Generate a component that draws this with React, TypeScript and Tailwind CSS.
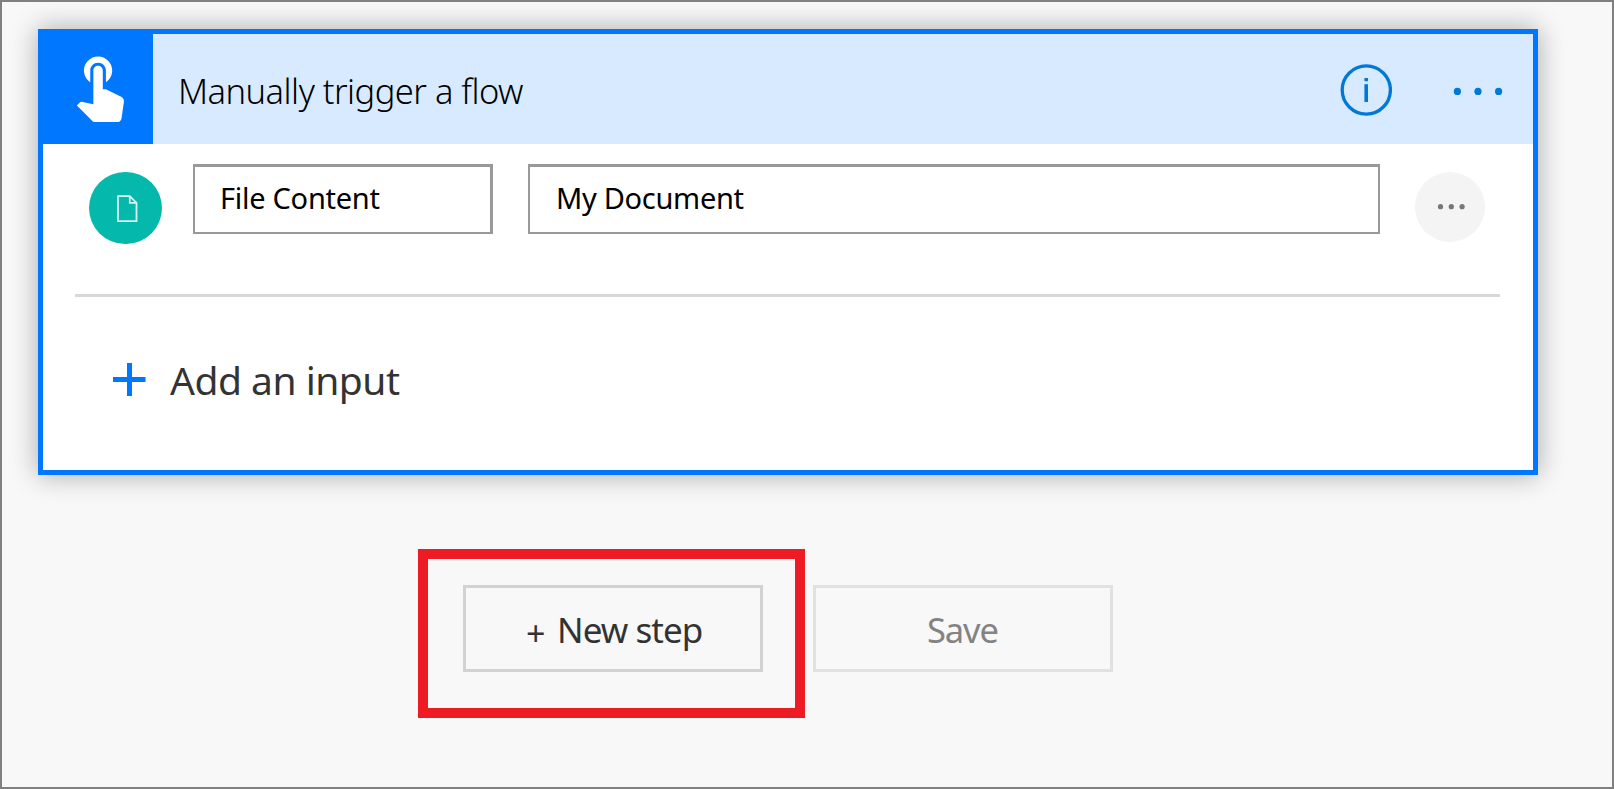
import React from "react";

const sans = "font-['Noto_Sans','Open_Sans',sans-serif]";

function TouchIcon() {
  return (
    <svg viewBox="0 0 24 24" className="size-[75.3px] shrink-0 fill-white" aria-hidden="true">
      <path d="M9 11.24V7.5C9 6.12 10.12 5 11.5 5S14 6.12 14 7.5v3.74c1.21-.81 2-2.18 2-3.74C16 5.01 13.99 3 11.5 3S7 5.01 7 7.5c0 1.56.79 2.93 2 3.74zm9.84 4.63l-4.54-2.26c-.17-.07-.35-.11-.54-.11H13v-6c0-.83-.67-1.5-1.5-1.5S10 6.67 10 7.5v10.74l-3.43-.72c-.08-.01-.15-.03-.24-.03-.31 0-.59.13-.79.33l-.79.8 4.94 4.94c.27.27.65.44 1.06.44h6.79c.75 0 1.33-.55 1.44-1.28l.75-5.27c.01-.07.02-.14.02-.2 0-.62-.38-1.16-.91-1.38z" />
    </svg>
  );
}

function InfoIcon() {
  return (
    <svg viewBox="0 0 52 52" className="size-[52px]" aria-hidden="true">
      <circle cx="26.3" cy="26" r="24.1" fill="none" stroke="#0078d7" strokeWidth="3.3" />
      <rect x="24.4" y="14" width="3.6" height="3.2" fill="#0078d7" />
      <rect x="24.4" y="20.2" width="3.6" height="17.8" fill="#0078d7" />
    </svg>
  );
}

function MoreIcon() {
  return (
    <svg viewBox="0 0 50 8" className="h-2 w-[50px]" fill="#0078d7" aria-hidden="true">
      <circle cx="4.4" cy="4.4" r="3.6" />
      <circle cx="25" cy="4.4" r="3.6" />
      <circle cx="45.6" cy="4.4" r="3.6" />
    </svg>
  );
}

function FileIcon() {
  return (
    <svg viewBox="0 0 21 28" className="h-7 w-[21px]" fill="none" stroke="#d9f4f1" strokeWidth="1.8" aria-hidden="true">
      <path d="M1 1.2H12.8L19.5 7.9V26.2H1Z" />
      <path d="M12.8 1.2V7.9H19.5" />
    </svg>
  );
}

export default function App() {
  return (
    <main className={`h-[789px] w-[1614px] overflow-hidden border-2 border-[#808080] bg-[#f8f8f8] pl-9 pt-[27px] ${sans}`}>
      <section className="h-[446px] w-[1500px] border-[5px] border-[#0077ff] bg-white shadow-[0_0_26px_rgba(0,0,0,0.32)]">
        <header className="flex h-[110px] bg-[#d8eaff]">
          <div className="flex w-[110px] shrink-0 bg-[#0077ff] pl-[18.5px] pt-[12.5px]">
            <TouchIcon />
          </div>
          <h1 className="flex-1 whitespace-nowrap pl-[25px] pt-[33px] text-[34.5px] font-light leading-[48px] tracking-[-0.52px] text-black">
            Manually trigger a flow
          </h1>
          <button className="mt-[30px] h-[52px]" aria-label="Information"><InfoIcon /></button>
          <button className="ml-[61px] mr-[30px] mt-[53px] h-2" aria-label="More"><MoreIcon /></button>
        </header>

        <div className="flex h-[150px] items-start pl-[46px] pt-5">
          <div className="mt-2 flex h-[72px] w-[73px] shrink-0 items-center justify-center rounded-full bg-[#04b9ac] pl-[3px] pt-px">
            <FileIcon />
          </div>
          <div className="ml-[31px] h-[70px] w-[300px] whitespace-nowrap border-2 border-r-[3px] border-t-[3px] border-[#999] pl-[25px] pt-[11px] text-[29px] leading-[40px] tracking-[-0.27px] text-black">
            File Content
          </div>
          <div className="ml-[35px] h-[70px] w-[852px] whitespace-nowrap border-2 border-t-[3px] border-[#999] pl-[26px] pt-[11px] text-[29px] leading-[40px] tracking-[-0.3px] text-black">
            My Document
          </div>
          <button className="ml-[35px] mt-2 flex size-[70px] items-center justify-center rounded-full bg-[#f4f4f4] pl-px" aria-label="Input options">
            <svg viewBox="0 0 28 6" className="h-1.5 w-7" fill="#777" aria-hidden="true">
              <circle cx="3.5" cy="2.7" r="2.6" />
              <circle cx="14.3" cy="2.7" r="2.6" />
              <circle cx="25.1" cy="2.7" r="2.6" />
            </svg>
          </button>
        </div>

        <div className="ml-8 h-[3px] w-[1425px] bg-[#d8d8d8]" />

        <button className="ml-[70px] mt-[56px] flex items-center whitespace-nowrap text-[39px] leading-[54px] tracking-[-0.5px] text-[#333]">
          <svg viewBox="0 0 33 33" className="mb-px size-[33px]" fill="#0077ff" aria-hidden="true">
            <path d="M14 0h5v14h13.5v5H19v14h-5V19H0v-5h14z" />
          </svg>
          <span className="ml-6">Add an input</span>
        </button>
      </section>

      <div className="ml-[380px] mt-[74px] flex">
        <div className="h-[169px] w-[387px] border-[10px] border-[#ed1c24] pl-[35px] pt-[26px]">
          <button className="flex h-[87px] w-[300px] whitespace-nowrap border-[3px] border-[#d2d2d2] pl-[60px] pt-[18px] text-[35px] leading-[48px] tracking-[-0.95px] text-[#333]">
            <span className="w-[31px] pt-[3px] text-left text-[34px]">+</span>
            <span>New step</span>
          </button>
        </div>
        <button className="ml-2 mt-9 flex h-[87px] w-[300px] whitespace-nowrap border-[3px] border-[#e1e1e1] pl-[111px] pt-[18px] text-[34.5px] leading-[48px] tracking-[-1.1px] text-[#838383]">
          <span>Save</span>
        </button>
      </div>
    </main>
  );
}
